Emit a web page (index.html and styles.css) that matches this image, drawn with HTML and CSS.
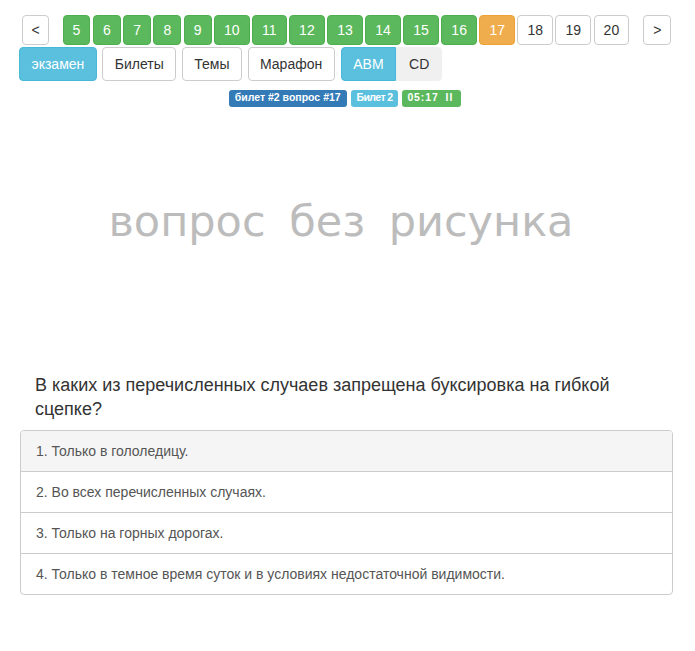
FILE: index.html
```html
<!DOCTYPE html>
<html lang="ru">
<head>
  <meta charset="UTF-8" />
  <title>Экзамен ПДД - билет 2</title>
  <meta name="viewport" content="width=device-width, initial-scale=1.0"/>
  <link rel="stylesheet" href="styles.css">
</head>
<body>

<div class="container">

  <div class="pager">
    <a href="#" class="btn nav-btn">&lt;</a>
    <div class="pages">
      <a href="#" class="btn page done">5</a>
      <a href="#" class="btn page done">6</a>
      <a href="#" class="btn page done">7</a>
      <a href="#" class="btn page done">8</a>
      <a href="#" class="btn page done">9</a>
      <a href="#" class="btn page done">10</a>
      <a href="#" class="btn page done">11</a>
      <a href="#" class="btn page done">12</a>
      <a href="#" class="btn page done">13</a>
      <a href="#" class="btn page done">14</a>
      <a href="#" class="btn page done">15</a>
      <a href="#" class="btn page done">16</a>
      <a href="#" class="btn page current">17</a>
      <a href="#" class="btn page">18</a>
      <a href="#" class="btn page">19</a>
      <a href="#" class="btn page">20</a>
    </div>
    <a href="#" class="btn nav-btn next">&gt;</a>
  </div>

  <div class="modes">
    <a href="#" class="btn mode active">экзамен</a>
    <a href="#" class="btn mode">Билеты</a>
    <a href="#" class="btn mode">Темы</a>
    <a href="#" class="btn mode">Марафон</a>
    <div class="btn-group">
      <a href="#" class="btn mode active">ABM</a>
      <a href="#" class="btn mode muted">CD</a>
    </div>
  </div>

  <div class="labels">
    <span class="label label-primary">билет #2 вопрос #17</span>
    <span class="label label-info">Билет 2</span>
    <span class="label label-success timer">05:17 <span class="pause">II</span></span>
  </div>

  <div class="picture">
    <span>вопрос без рисунка</span>
  </div>

  <h4 class="question">В каких из перечисленных случаев запрещена буксировка на гибкой сцепке?</h4>

  <div class="answers">
    <a href="#" class="answer hover">1. Только в гололедицу.</a>
    <a href="#" class="answer">2. Во всех перечисленных случаях.</a>
    <a href="#" class="answer">3. Только на горных дорогах.</a>
    <a href="#" class="answer">4. Только в темное время суток и в условиях недостаточной видимости.</a>
  </div>

</div>

</body>
</html>
```

FILE: styles.css
```css
body {
  margin: 0;
  font-family: 'Liberation Sans', Arial, sans-serif;
  font-size: 14px;
  color: #333;
  background-color: #fff;
}

a {
  text-decoration: none;
}

.container {
  width: 653px;
  padding: 15px 0 0 20px;
}

.btn {
  display: inline-block;
  box-sizing: border-box;
  border: 1px solid #ccc;
  border-radius: 4px;
  background-color: #fff;
  color: #333;
  text-align: center;
  white-space: nowrap;
}

/* pager */
.pager {
  display: flex;
  align-items: center;
  padding-left: 2px;
}

.pages {
  display: flex;
  gap: 2.3px;
  margin: 0 14px 0 13.5px;
}

.nav-btn {
  width: 27px;
  height: 30px;
  line-height: 28px;
}

.nav-btn.next {
  width: 28px;
}

.page {
  height: 30px;
  line-height: 28px;
  padding: 0 9.1px;
}

.page.done {
  background-color: #5cb85c;
  border-color: #4cae4c;
  color: #fff;
}

.page.current {
  background-color: #f0ad4e;
  border-color: #eea236;
  color: #fff;
}

/* modes */
.modes {
  display: flex;
  gap: 5.5px;
  margin: 2px 0 0 -1px;
}

.mode {
  height: 34px;
  line-height: 20px;
  padding: 6px 11.5px;
}

.mode.active {
  background-color: #5bc0de;
  border-color: #46b8da;
  color: #fff;
}

.mode.muted {
  background-color: #f0f0f0;
  border-color: #f0f0f0;
  padding: 6px 12px;
}

.btn-group {
  display: flex;
  margin-left: 0.5px;
}

.btn-group .btn:first-child {
  border-top-right-radius: 0;
  border-bottom-right-radius: 0;
}

.btn-group .btn:last-child {
  border-top-left-radius: 0;
  border-bottom-left-radius: 0;
}

/* labels */
.labels {
  margin-top: 9px;
  text-align: center;
  padding-right: 3px;
  line-height: 17px;
}

.label {
  display: inline-block;
  padding: 2px 6px 3px;
  font-size: 10.5px;
  font-weight: bold;
  line-height: 1.1;
  color: #fff;
  border-radius: 3px;
  vertical-align: top;
}

.label-primary {
  background-color: #337ab7;
}

.label-info {
  background-color: #5bc0de;
  letter-spacing: -0.6px;
}

.label-success {
  background-color: #5cb85c;
}

.timer {
  padding: 2px 8px 3px 5px;
  letter-spacing: 0.9px;
}

.pause {
  margin-left: 3px;
}

/* picture placeholder */
.picture {
  height: 228px;
  display: flex;
  align-items: center;
  justify-content: center;
  padding-right: 11px;
}

.picture span {
  font-family: 'DejaVu Sans', Verdana, sans-serif;
  font-size: 43px;
  line-height: 1;
  word-spacing: 10px;
  color: #bcbcbc;
}

/* question */
.question {
  margin: 38px 0 9px;
  padding: 0 15px;
  font-size: 18px;
  font-weight: normal;
  line-height: 24px;
  color: #333;
}

.answers {
  border: 1px solid #ccc;
  border-radius: 4px;
  overflow: hidden;
}

.answer {
  display: block;
  padding: 10px 15px;
  line-height: 20px;
  font-size: 14px;
  color: #555;
  border-top: 1px solid #ccc;
}

.answer:first-child {
  border-top: none;
}

.answer.hover {
  background-color: #f5f5f5;
}
```
